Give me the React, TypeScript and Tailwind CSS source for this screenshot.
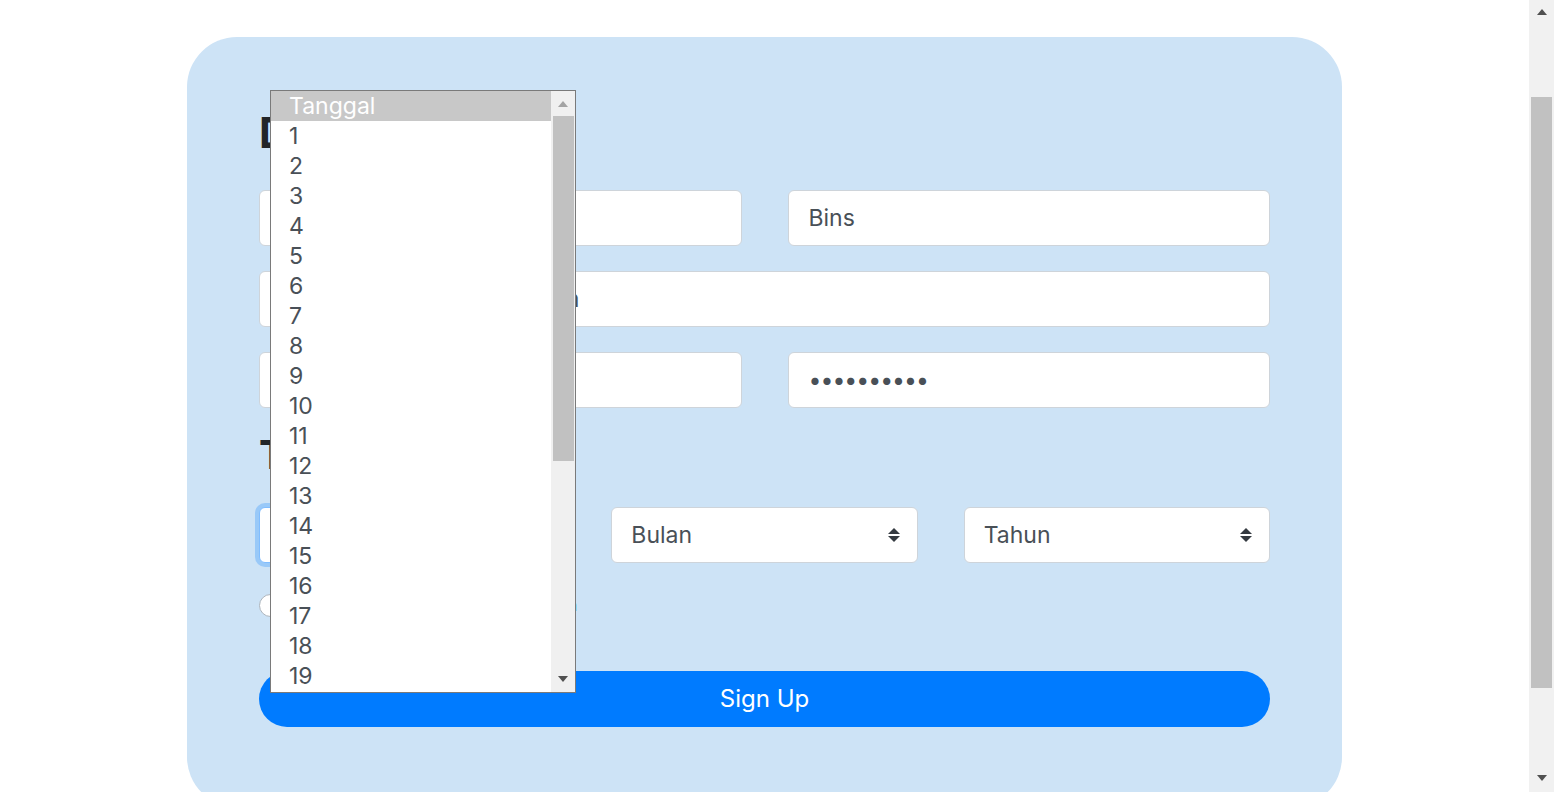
import React from "react";

const inputCls =
  "h-[56px] w-full rounded-[6px] border border-[#ced4da] bg-white px-[20px] text-[23px] text-[#495057] outline-none";

function UpDown() {
  return (
    <svg width="14" height="16" viewBox="0 0 14 16" className="shrink-0">
      <path d="M7 1 L13 7 L1 7 Z" fill="#343a40" />
      <path d="M1 9 L13 9 L7 15 Z" fill="#343a40" />
    </svg>
  );
}

function SelectBox({ label, focused }: { label: string; focused?: boolean }) {
  return (
    <div
      className={
        "flex h-[56px] items-center justify-between rounded-[6px] border bg-white pl-[19px] pr-[16px] text-[23px] text-[#495057] " +
        (focused
          ? "border-[#80bdff] shadow-[0_0_0_4px_rgba(0,123,255,0.25)]"
          : "border-[#ced4da]")
      }
    >
      <span>{label}</span>
      <UpDown />
    </div>
  );
}

function Tri({ dir, color }: { dir: "up" | "down"; color: string }) {
  return (
    <svg width="10" height="6" viewBox="0 0 10 6">
      {dir === "up" ? (
        <path d="M0 6 L5 0 L10 6 Z" fill={color} />
      ) : (
        <path d="M0 0 L10 0 L5 6 Z" fill={color} />
      )}
    </svg>
  );
}

export default function App() {
  const days = Array.from({ length: 19 }, (_, i) => i + 1);
  return (
    <div className="relative flex h-[792px] w-full overflow-hidden bg-white font-['Inter',sans-serif]">
      <main className="flex-1 overflow-hidden">
        <div className="ml-[187px] mt-[37px] w-[1155px] rounded-[50px] bg-[#cde3f6] px-[72px] pb-[80px] pt-[72px]">
          <h1 className="text-[42px] font-bold leading-[48px] text-[#212529]">Daftar Akun</h1>
          <div className="mt-[33px] grid grid-cols-2 gap-x-[46px] gap-y-[25px]">
            <input className={inputCls} readOnly value="Ghozali" />
            <input className={inputCls} readOnly value="Bins" />
            <input
              className={inputCls + " col-span-2 tracking-[-0.25px]"}
              readOnly
              value="ahmadrizki.bins@gmail.com"
            />
            <input className={inputCls} readOnly value="081234567890" />
            <input className={inputCls + " tracking-[-1px]"} type="password" readOnly value="abcdefghij" />
          </div>
          <h2 className="mt-[23px] text-[40px] font-bold leading-[48px] text-[#212529]">Tanggal Lahir</h2>
          <div className="mt-[28px] grid grid-cols-3 gap-x-[46px]">
            <SelectBox label="Tanggal" focused />
            <SelectBox label="Bulan" />
            <SelectBox label="Tahun" />
          </div>
          <div className="mt-[30px] flex h-[24px] items-center gap-[10px] text-[16px] tracking-[-0.15px] text-[#212529]">
            <span className="h-[23px] w-[23px] rounded-full border border-[#adb5bd] bg-white" />
            <span>
              Saya menyetujui <span className="text-[#007bff]">Syarat dan Ketentuan</span>
            </span>
          </div>
          <button className="mt-[54px] flex h-[56px] w-full items-center justify-center rounded-full bg-[#007bff] text-[24px] text-white">
            Sign Up
          </button>
        </div>
      </main>

      {/* page scrollbar */}
      <div className="flex w-[25px] flex-col items-center bg-[#f1f1f1]">
        <div className="flex h-[24px] items-center justify-center">
          <Tri dir="up" color="#505050" />
        </div>
        <div className="mt-[73px] h-[591px] w-[21px] bg-[#c1c1c1]" />
        <div className="flex-1" />
        <div className="flex h-[28px] items-center justify-center">
          <Tri dir="down" color="#505050" />
        </div>
      </div>

      {/* open dropdown list */}
      <div className="absolute left-[270px] top-[90px] flex h-[603px] w-[306px] border border-[#7a7a7a] bg-white text-[23px]">
        <div className="flex flex-1 flex-col">
          <div className="h-[30px] bg-[#c8c8c8] pl-[18px] leading-[30px] text-white">Tanggal</div>
          {days.map((d) => (
            <div key={d} className="h-[30px] pl-[18px] leading-[30px] text-[#495057]">
              {d}
            </div>
          ))}
        </div>
        <div className="flex w-[24px] flex-col items-center bg-[#f0f0f0]">
          <div className="flex h-[25px] items-center justify-center">
            <Tri dir="up" color="#a3a3a3" />
          </div>
          <div className="h-[345px] w-[21px] bg-[#c1c1c1]" />
          <div className="flex-1" />
          <div className="flex h-[26px] items-center justify-center">
            <Tri dir="down" color="#505050" />
          </div>
        </div>
      </div>
    </div>
  );
}
